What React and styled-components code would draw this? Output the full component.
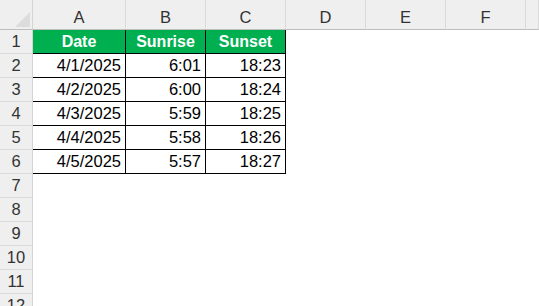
import styled, { createGlobalStyle } from "styled-components";

const GlobalStyle = createGlobalStyle`
  html, body {
    margin: 0;
    padding: 0;
    background: #fff;
    overflow: hidden;
  }
`;

const columns = ["A", "B", "C", "D", "E", "F", "G"];

const data = [
  ["4/1/2025", "6:01", "18:23"],
  ["4/2/2025", "6:00", "18:24"],
  ["4/3/2025", "5:59", "18:25"],
  ["4/4/2025", "5:58", "18:26"],
  ["4/5/2025", "5:57", "18:27"],
];

const headings = ["Date", "Sunrise", "Sunset"];
const ROW_COUNT = 12;

const App = () => {
  return (
    <>
      <GlobalStyle />
      <Sheet>
        <Corner>
          <svg width="33" height="30" viewBox="0 0 33 30">
            <polygon points="15,27 30,27 30,12" fill="#dcdcdc" />
          </svg>
        </Corner>
        {columns.map((col) => (
          <ColHeader key={col}>{col !== "G" ? col : ""}</ColHeader>
        ))}

        {Array.from({ length: ROW_COUNT }, (_, r) => {
          const rowNum = r + 1;
          return [
            <RowHeader key={`h${rowNum}`}>{rowNum}</RowHeader>,
            ...columns.map((col, c) => {
              if (rowNum === 1 && c < 3) {
                return <HeadCell key={col + rowNum}>{headings[c]}</HeadCell>;
              }
              if (rowNum > 1 && rowNum <= data.length + 1 && c < 3) {
                return (
                  <DataCell key={col + rowNum}>{data[rowNum - 2][c]}</DataCell>
                );
              }
              return <EmptyCell key={col + rowNum} />;
            }),
          ];
        })}
      </Sheet>
    </>
  );
};

export default App;

const Sheet = styled.div`
  display: grid;
  grid-template-columns: 33px 93px 80px 80px 80px 80px 80px 1fr;
  grid-template-rows: 30px repeat(${ROW_COUNT}, 24px);
  width: 539px;
  height: 306px;
  overflow: hidden;
  font-family: "Liberation Sans", Arial, sans-serif;
`;

const Corner = styled.div`
  background: #efefef;
  border-right: 1px solid #d4d4d4;
  border-bottom: 1px solid #bdbdbd;
  box-sizing: border-box;
  svg {
    display: block;
  }
`;

const ColHeader = styled.div`
  display: flex;
  align-items: flex-end;
  justify-content: center;
  padding-bottom: 2px;
  box-sizing: border-box;
  background: #efefef;
  border-right: 1px solid #d9d9d9;
  border-bottom: 1px solid #bdbdbd;
  color: #333;
  font-size: 16.5px;
`;

const RowHeader = styled.div`
  display: flex;
  align-items: center;
  justify-content: center;
  box-sizing: border-box;
  background: #efefef;
  border-right: 1px solid #d4d4d4;
  border-bottom: 1px solid #dadada;
  color: #333;
  font-size: 16.5px;
`;

const HeadCell = styled.div`
  display: flex;
  align-items: center;
  justify-content: center;
  box-sizing: border-box;
  background: #00b050;
  border-right: 1px solid #000;
  border-bottom: 1px solid #000;
  color: #fff;
  font-weight: 700;
  font-size: 16px;
`;

const DataCell = styled.div`
  display: flex;
  align-items: center;
  justify-content: flex-end;
  padding-right: 4px;
  box-sizing: border-box;
  background: #fff;
  border-right: 1px solid #000;
  border-bottom: 1px solid #000;
  color: #000;
  font-size: 16.5px;
`;

const EmptyCell = styled.div`
  background: #fff;
`;
